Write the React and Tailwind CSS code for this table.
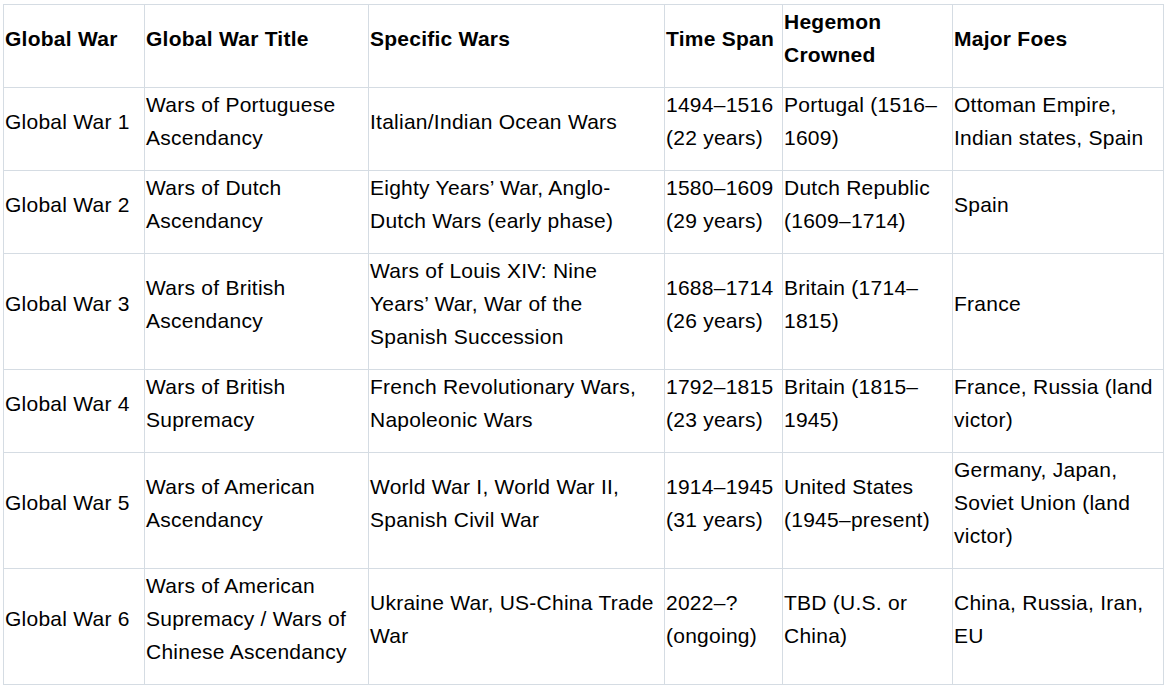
const headers = [
  ["Global War"],
  ["Global War Title"],
  ["Specific Wars"],
  ["Time Span"],
  ["Hegemon", "Crowned"],
  ["Major Foes"],
];

const rows = [
  [
    ["Global War 1"],
    ["Wars of Portuguese", "Ascendancy"],
    ["Italian/Indian Ocean Wars"],
    ["1494–1516", "(22 years)"],
    ["Portugal (1516–", "1609)"],
    ["Ottoman Empire,", "Indian states, Spain"],
  ],
  [
    ["Global War 2"],
    ["Wars of Dutch", "Ascendancy"],
    ["Eighty Years’ War, Anglo-", "Dutch Wars (early phase)"],
    ["1580–1609", "(29 years)"],
    ["Dutch Republic", "(1609–1714)"],
    ["Spain"],
  ],
  [
    ["Global War 3"],
    ["Wars of British", "Ascendancy"],
    ["Wars of Louis XIV: Nine", "Years’ War, War of the", "Spanish Succession"],
    ["1688–1714", "(26 years)"],
    ["Britain (1714–", "1815)"],
    ["France"],
  ],
  [
    ["Global War 4"],
    ["Wars of British", "Supremacy"],
    ["French Revolutionary Wars,", "Napoleonic Wars"],
    ["1792–1815", "(23 years)"],
    ["Britain (1815–", "1945)"],
    ["France, Russia (land", "victor)"],
  ],
  [
    ["Global War 5"],
    ["Wars of American", "Ascendancy"],
    ["World War I, World War II,", "Spanish Civil War"],
    ["1914–1945", "(31 years)"],
    ["United States", "(1945–present)"],
    ["Germany, Japan,", "Soviet Union (land", "victor)"],
  ],
  [
    ["Global War 6"],
    ["Wars of American", "Supremacy / Wars of", "Chinese Ascendancy"],
    ["Ukraine War, US-China Trade", "War"],
    ["2022–?", "(ongoing)"],
    ["TBD (U.S. or", "China)"],
    ["China, Russia, Iran,", "EU"],
  ],
];

const widths = ["w-[141px]", "w-[224px]", "w-[296px]", "w-[118px]", "w-[170px]", "w-[211px]"];

function Cell({ lines, bold }) {
  return (
    <td className="border border-[#d5dce3] pl-px pr-[2px] pt-0 pb-[16px] align-middle">
      {lines.map((l, i) => (
        <div key={i} className={`whitespace-nowrap leading-[33px] ${bold ? "font-bold" : ""}`}>
          {l}
        </div>
      ))}
    </td>
  );
}

export default function App() {
  return (
    <div className="w-[1169px] h-[693px] bg-white overflow-hidden pl-[3px] pt-[4px] text-black text-[21px] tracking-[0.25px] font-['Liberation_Sans',Arial,sans-serif]">
      <table className="table-fixed border-collapse">
        <colgroup>
          {widths.map((w, i) => (
            <col key={i} className={w} />
          ))}
        </colgroup>
        <thead>
          <tr>
            {headers.map((h, i) => (
              <Cell key={i} lines={h} bold />
            ))}
          </tr>
        </thead>
        <tbody>
          {rows.map((r, i) => (
            <tr key={i}>
              {r.map((c, j) => (
                <Cell key={j} lines={c} />
              ))}
            </tr>
          ))}
        </tbody>
      </table>
    </div>
  );
}
